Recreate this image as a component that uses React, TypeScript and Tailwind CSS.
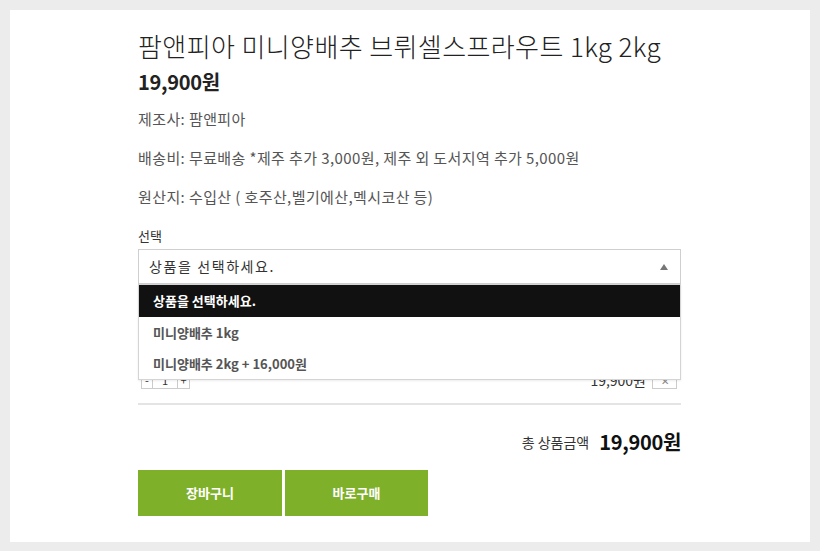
import { useState } from "react";

const options = [
  { label: "상품을 선택하세요." },
  { label: "미니양배추 1kg" },
  { label: "미니양배추 2kg + 16,000원" },
];

export default function App() {
  const [active] = useState(0);
  const [qty] = useState(1);

  return (
    <div
      className="min-h-[551px] bg-[#ececec] px-[10px] pt-[10px] pb-[9px]"
      style={{ fontFamily: '"Noto Sans CJK KR", "Noto Sans", sans-serif' }}
    >
      <div className="h-[532px] bg-white">
        <div className="ml-[128px] w-[543px] pt-[18px] text-[#222]">
          {/* Title + price */}
          <h1 className="text-[26px] font-light leading-[36px] tracking-[0.4px]">
            팜앤피아 미니양배추 브뤼셀스프라우트 1kg 2kg
          </h1>
          <div className="mt-[4px] text-[20px] font-bold leading-[28px] tracking-[-0.3px]">
            19,900원
          </div>

          {/* Info */}
          <div className="mt-[13px] flex flex-col gap-[19px] text-[15px] leading-[20px] tracking-[0.4px] text-[#555]">
            <p>제조사: 팜앤피아</p>
            <p>배송비: 무료배송 *제주 추가 3,000원, 제주 외 도서지역 추가 5,000원</p>
            <p>원산지: 수입산 ( 호주산,벨기에산,멕시코산 등)</p>
          </div>

          {/* Option select */}
          <div className="mt-[20px] text-[13px] leading-[18px] text-[#333]">선택</div>
          <div className="relative mt-[4px]">
            <div className="flex h-[35px] items-center justify-between border border-[#cfcfcf] pl-[10px] pr-[12px] text-[14px] tracking-[1.6px] text-[#333]">
              <span>상품을 선택하세요.</span>
              <svg width="8" height="6" viewBox="0 0 8 6">
                <path d="M4 0 L8 6 L0 6 Z" fill="#777" />
              </svg>
            </div>

            {/* Open dropdown */}
            <ul className="absolute left-0 right-0 top-[35px] z-10 border border-[#d4d4d4] bg-white text-[13px] font-bold shadow-[0_1px_2px_rgba(0,0,0,0.08)]">
              {options.map((o, i) => (
                <li
                  key={o.label}
                  className={
                    i === active
                      ? "flex h-[32px] items-center bg-[#111] pl-[14px] text-white"
                      : "flex h-[31px] items-center pl-[14px] text-[#555]"
                  }
                >
                  {o.label}
                </li>
              ))}
            </ul>

            {/* Selected item (behind dropdown) */}
            <div className="pt-[87px] pb-[14px]">
              <div className="flex h-[18px] items-center justify-between pl-[3px]">
                <div className="flex h-[18px] text-[11px] text-[#333]">
                  <button className="flex w-[12px] items-center justify-center border border-[#ccc] leading-none">-</button>
                  <span className="flex w-[24px] items-center justify-center border-y border-[#ccc] leading-none">{qty}</span>
                  <button className="flex w-[13px] items-center justify-center border border-[#ccc] leading-none">+</button>
                </div>
                <div className="flex items-center gap-[6px] pr-[4px]">
                  <span className="text-[14px] text-[#333]">19,900원</span>
                  <button className="flex h-[18px] w-[25px] items-center justify-center border border-[#ccc] text-[10px] text-[#888]">
                    ✕
                  </button>
                </div>
              </div>
            </div>
          </div>

          <div className="border-t-2 border-[#e4e4e4]" />

          {/* Total */}
          <div className="mt-[23px] flex items-center justify-end gap-[10px]">
            <span className="text-[14px] text-[#333]">총 상품금액</span>
            <span className="text-[20px] font-bold leading-[28px] tracking-[-0.3px] text-[#111]">19,900원</span>
          </div>

          {/* Buttons */}
          <div className="mt-[14px] flex gap-[3px]">
            <button className="h-[46px] w-[144px] bg-[#7fb02a] text-[13px] font-bold text-white">장바구니</button>
            <button className="h-[46px] w-[143px] bg-[#7fb02a] text-[13px] font-bold text-white">바로구매</button>
          </div>
        </div>
      </div>
    </div>
  );
}
